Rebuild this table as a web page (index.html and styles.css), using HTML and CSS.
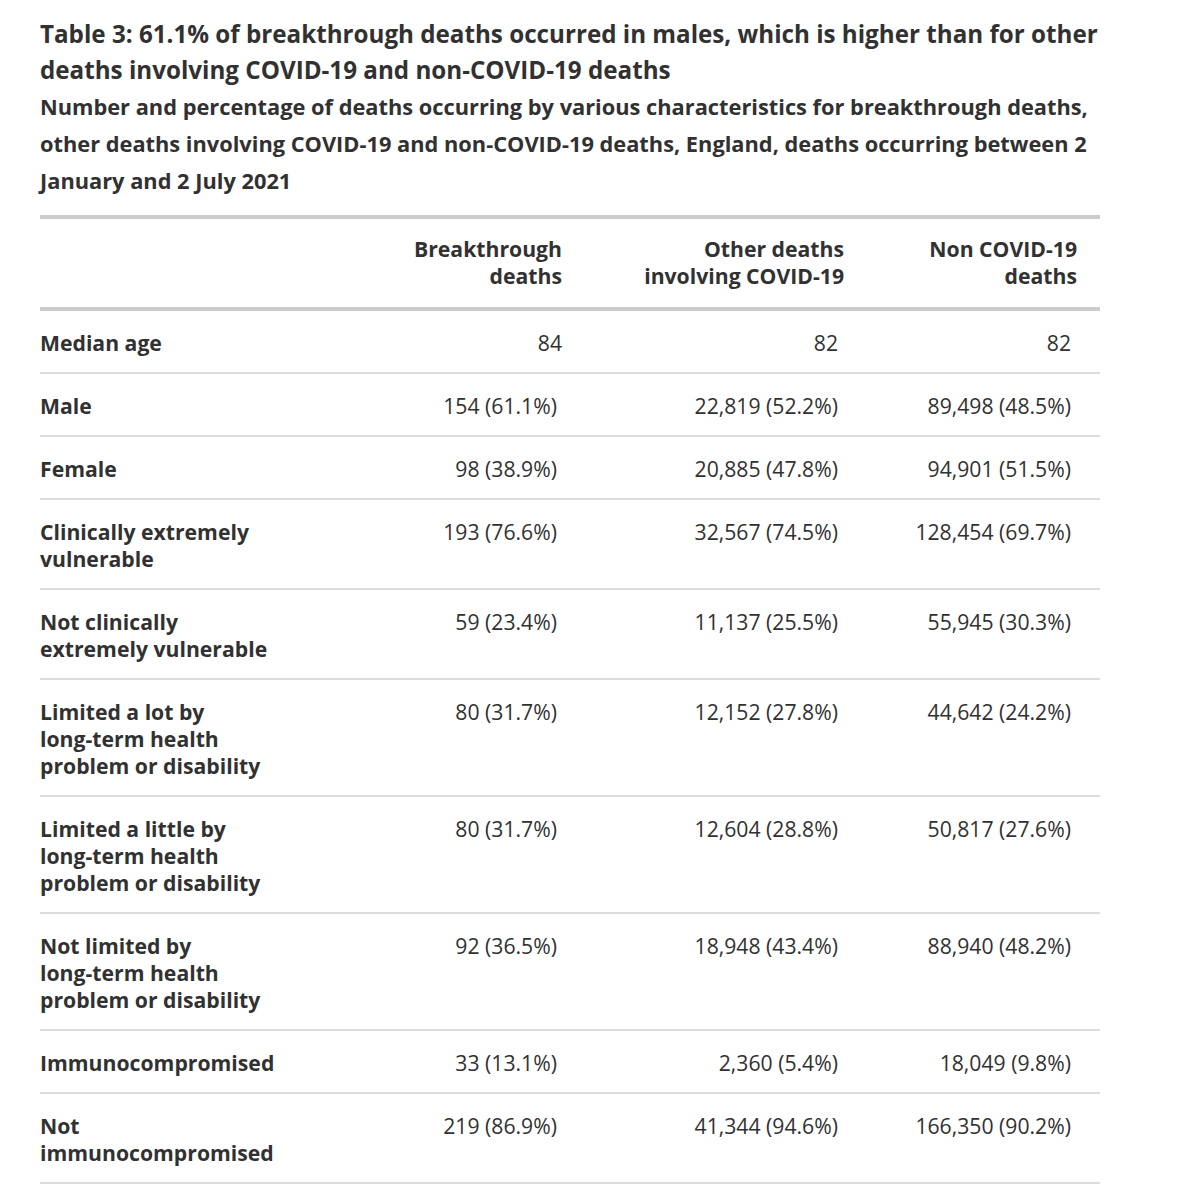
FILE: index.html
```html
<!DOCTYPE html>
<html lang="en">
<head>
<meta charset="utf-8">
<title>Table 3</title>
<link rel="stylesheet" href="styles.css">
</head>
<body>
<main class="page">
  <h2 class="title">Table 3: 61.1% of breakthrough deaths occurred in males, which is higher than for other deaths involving COVID-19 and non-COVID-19 deaths</h2>
  <p class="subtitle">Number and percentage of deaths occurring by various characteristics for breakthrough deaths, other deaths involving COVID-19 and non-COVID-19 deaths, England, deaths occurring between 2 January and 2 July 2021</p>
  <table class="data">
    <colgroup>
      <col class="c-label"><col class="c-1"><col class="c-2"><col class="c-3">
    </colgroup>
    <thead>
      <tr>
        <th></th>
        <th class="num h1">Breakthrough<br>deaths</th>
        <th class="num h2">Other deaths<br>involving COVID-19</th>
        <th class="num h3">Non COVID-19<br>deaths</th>
      </tr>
    </thead>
    <tbody>
      <tr><th>Median age</th><td class="num v1 plain">84</td><td class="num v2">82</td><td class="num v3">82</td></tr>
      <tr><th>Male</th><td class="num v1">154 (61.1%)</td><td class="num v2">22,819 (52.2%)</td><td class="num v3">89,498 (48.5%)</td></tr>
      <tr><th>Female</th><td class="num v1">98 (38.9%)</td><td class="num v2">20,885 (47.8%)</td><td class="num v3">94,901 (51.5%)</td></tr>
      <tr><th>Clinically extremely vulnerable</th><td class="num v1">193 (76.6%)</td><td class="num v2">32,567 (74.5%)</td><td class="num v3">128,454 (69.7%)</td></tr>
      <tr><th>Not clinically extremely vulnerable</th><td class="num v1">59 (23.4%)</td><td class="num v2">11,137 (25.5%)</td><td class="num v3">55,945 (30.3%)</td></tr>
      <tr><th>Limited a lot by long-&#8288;term health problem or disability</th><td class="num v1">80 (31.7%)</td><td class="num v2">12,152 (27.8%)</td><td class="num v3">44,642 (24.2%)</td></tr>
      <tr><th>Limited a little by long-&#8288;term health problem or disability</th><td class="num v1">80 (31.7%)</td><td class="num v2">12,604 (28.8%)</td><td class="num v3">50,817 (27.6%)</td></tr>
      <tr><th>Not limited by long-&#8288;term health problem or disability</th><td class="num v1">92 (36.5%)</td><td class="num v2">18,948 (43.4%)</td><td class="num v3">88,940 (48.2%)</td></tr>
      <tr><th>Immunocompromised</th><td class="num v1">33 (13.1%)</td><td class="num v2">2,360 (5.4%)</td><td class="num v3">18,049 (9.8%)</td></tr>
      <tr><th>Not immunocompromised</th><td class="num v1">219 (86.9%)</td><td class="num v2">41,344 (94.6%)</td><td class="num v3">166,350 (90.2%)</td></tr>
      <tr class="last"><th>Lowest deprivation quintile</th><td class="num v1">56 (22.2%)</td><td class="num v2">6,873 (15.7%)</td><td class="num v3">35,402 (19.2%)</td></tr>
    </tbody>
  </table>
</main>
</body>
</html>
```
FILE: styles.css
```css
html, body {
  margin: 0;
  padding: 0;
  background: #ffffff;
}

body {
  font-family: "Open Sans", "Noto Sans", "Liberation Sans", sans-serif;
  color: #323132;
}

.page {
  padding: 16px 82px 0 40px;
}

.title {
  margin: 0;
  font-size: 24.2px;
  line-height: 36px;
  font-weight: 700;
}

.subtitle {
  margin: 0;
  font-size: 21.8px;
  line-height: 37px;
  font-weight: 700;
}

.data {
  margin-top: 16px;
  width: 1060px;
  border-collapse: collapse;
  table-layout: fixed;
  font-size: 21.2px;
  line-height: 27px;
}

.c-label { width: 260px; }
.c-1 { width: 282px; }
.c-2 { width: 283px; }
.c-3 { width: 235px; }

.data thead tr {
  border-top: 4px solid #cccccc;
  border-bottom: 4px solid #cccccc;
}

.data thead th {
  padding: 16px 20px 18px 0;
  font-weight: 700;
  vertical-align: top;
}

.data thead th.h2 { padding-right: 21px; }
.data thead th.h3 { padding-right: 23px; }

.data tbody tr {
  border-bottom: 2px solid #dcdcdc;
}

.data tbody th {
  text-align: left;
  font-weight: 700;
  padding: 18px 20px 16px 0;
  vertical-align: top;
}

.data tbody td {
  font-weight: 400;
  padding: 18px 25px 16px 0;
  vertical-align: top;
}

.data tbody td.v2 { padding-right: 27px; }
.data tbody td.v3 { padding-right: 29px; }
.data tbody td.plain { padding-right: 20px; }

.num {
  text-align: right;
}
```
